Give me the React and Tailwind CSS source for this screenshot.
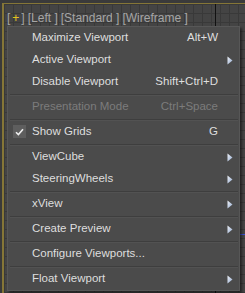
import React from 'react';

const items = [
  { label: 'Maximize Viewport', shortcut: 'Alt+W' },
  { label: 'Active Viewport', sub: true },
  { label: 'Disable Viewport', shortcut: 'Shift+Ctrl+D' },
  { sep: true },
  { label: 'Presentation Mode', shortcut: 'Ctrl+Space', disabled: true },
  { sep: true },
  { label: 'Show Grids', shortcut: 'G', checked: true },
  { sep: true },
  { label: 'ViewCube', sub: true },
  { label: 'SteeringWheels', sub: true },
  { sep: true },
  { label: 'xView', sub: true },
  { sep: true },
  { label: 'Create Preview', sub: true },
  { sep: true },
  { label: 'Configure Viewports...' },
  { sep: true },
  { label: 'Float Viewport', sub: true },
];

function Arrow() {
  return (
    <svg width="6" height="9" viewBox="0 0 6 9">
      <defs>
        <linearGradient id="arr" x1="0" y1="0" x2="1" y2="1">
          <stop offset="0" stopColor="#f2f5fa" />
          <stop offset="1" stopColor="#8fa6cc" />
        </linearGradient>
      </defs>
      <polygon points="0.5,0.5 5.5,4.5 0.5,8.5" fill="url(#arr)" />
    </svg>
  );
}

function Check() {
  return (
    <div className="absolute left-[5px] top-[4px] w-[13px] h-[13px] bg-[#5e5e5e] flex items-center justify-center">
      <svg width="9" height="8" viewBox="0 0 9 8">
        <path d="M1 4.2 L3.4 6.6 L8 1.2" stroke="#eeeeee" strokeWidth="1.6" fill="none" />
      </svg>
    </div>
  );
}

export default function App() {
  return (
    <div
      className="w-[245px] h-[293px] bg-[#3a3a3a] pt-[3px] pl-[2px] overflow-hidden"
      style={{ fontFamily: '"Liberation Sans", Arial, sans-serif' }}
    >
      <div className="relative h-[290px] border-l-[2px] border-t-[1px] border-[#857637] bg-[#444444] bg-[linear-gradient(to_right,#393939_1px,transparent_1px),linear-gradient(to_bottom,#393939_1px,transparent_1px)] bg-[size:9px_9px]">
        <div className="absolute left-[211px] top-0 w-[1px] h-full bg-[#111111]" />
        <div className="absolute left-[236px] top-[230px] w-[8px] h-[1px] bg-[#3b4fd0]" />

        <div className="relative flex items-center h-[14px] mt-[7px] ml-[3px] text-[12px] leading-[14px] text-[#a6a6a6] gap-[3px]">
          <span>
            [<span className="text-[#e6c21e] px-[2px]">+</span>]
          </span>
          <span>[Left ]</span>
          <span>[Standard ]</span>
          <span>[Wireframe ]</span>
        </div>

        <div className="relative mt-[1px] ml-[3px] w-[233px] bg-[#4b4b4b] border border-[#575757] shadow-[2px_2px_2px_rgba(0,0,0,0.45)]">
          {items.map((it, i) =>
            it.sep ? (
              <div key={i} className="h-[3px] flex flex-col justify-center ml-[2px] mr-[1px]">
                <div className="h-[1px] bg-[#3e3e3e]" />
                <div className="h-[1px] bg-[#525252]" />
              </div>
            ) : (
              <div
                key={i}
                className={
                  'relative flex items-center h-[22px] text-[11.5px] ' +
                  (it.disabled ? 'text-[#7c7c7c]' : 'text-[#dedede]')
                }
              >
                {it.checked && <Check />}
                <span className="flex-1 pl-[24px]">{it.label}</span>
                {it.shortcut && <span>{it.shortcut}</span>}
                <span className="w-[21px] flex items-center justify-center pl-[3px]">
                  {it.sub && <Arrow />}
                </span>
              </div>
            )
          )}
        </div>
      </div>
    </div>
  );
}
